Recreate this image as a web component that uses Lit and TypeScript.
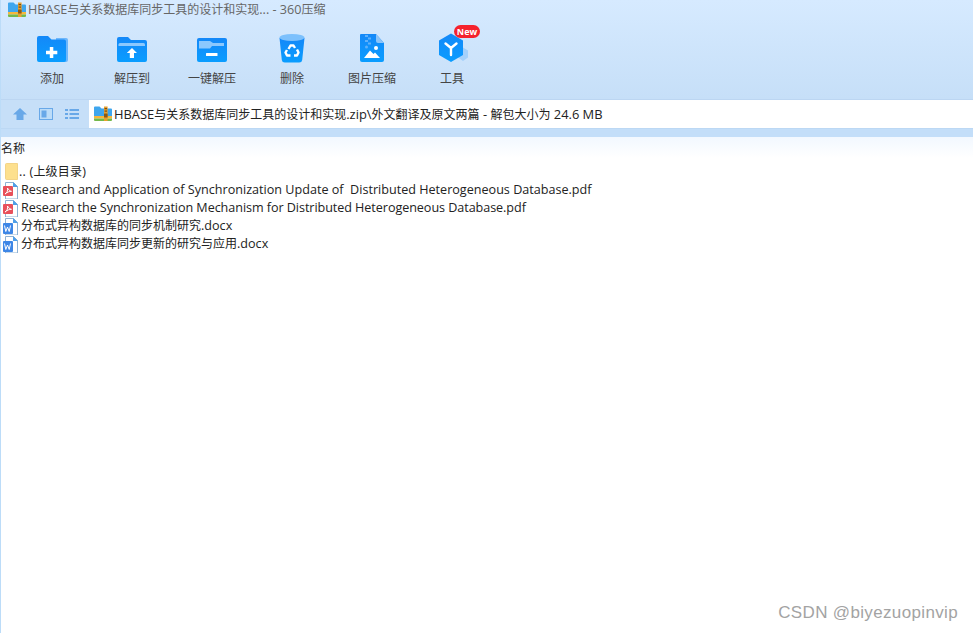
import { LitElement, html, css, svg } from "lit";
import { customElement } from "lit/decorators.js";

const zipIcon = svg`<svg class="zip" width="18" height="18" viewBox="0 0 18 18">
  <path d="M0 2.500a1 1 0 0 1 1-1h4.500l2 2H17a1 1 0 0 1 1 1V11H0z" fill="#3fa6ee"/>
  <rect x="0" y="11" width="18" height="2.500" fill="#f6b73c"/>
  <path d="M0 13.500h18V15a1 1 0 0 1-1 1H1a1 1 0 0 1-1-1z" fill="#74b84a"/>
  <rect x="10" y="1.500" width="3.600" height="14.500" fill="#e8a02c"/>
  <rect x="10.600" y="3" width="2.400" height="1.200" fill="#7a4b12"/>
  <rect x="10.600" y="5.500" width="2.400" height="1.200" fill="#7a4b12"/>
  <rect x="10" y="8.500" width="3.600" height="4" rx=".6" fill="#8a5a18"/>
</svg>`;

const defs = svg`<defs>
  <linearGradient id="blue" x1="0" y1="0" x2="0" y2="1">
    <stop offset="0" stop-color="#1488f8"/><stop offset="1" stop-color="#0a9dff"/>
  </linearGradient>
</defs>`;

const addIcon = svg`<svg width="32" height="30" viewBox="0 0 32 30">${defs}
  <path d="M20 5h10a2 2 0 0 1 2 2v20a2 2 0 0 1-2 2H20z" fill="#6db6fb"/>
  <path d="M1 5a2 2 0 0 1 2-2h9l3.500 3.500H28a2 2 0 0 1 2 2V27a2 2 0 0 1-2 2H3a2 2 0 0 1-2-2z" fill="url(#blue)"/>
  <path d="M13.800 14h3.500v3.800h4v3.400h-4V25h-3.500v-3.800H10v-3.400h3.800z" fill="#fff"/>
</svg>`;
const extractIcon = svg`<svg width="32" height="30" viewBox="0 0 32 30">
  <path d="M1 6a2 2 0 0 1 2-2h9l3 3h14a2 2 0 0 1 2 2v18a2 2 0 0 1-2 2H3a2 2 0 0 1-2-2z" fill="url(#blue)"/>
  <path d="M2.500 11.500a1.500 1.500 0 0 1 1.500-1.500h23.500a1.500 1.500 0 0 1 1.500 1.500V13H2.500z" fill="#8cc8fd"/>
  <path d="M16 15l5 5h-3v5h-4.200v-5h-3z" fill="#fff"/>
</svg>`;
const oneKeyIcon = svg`<svg width="32" height="30" viewBox="0 0 32 30">
  <rect x="1" y="5" width="30" height="24" rx="2" fill="url(#blue)"/>
  <path d="M3 8h11l3 2h11v3H16l-2 2.500H3z" fill="#8cc8fd"/>
  <rect x="10" y="20" width="11.500" height="3" rx=".5" fill="#fff"/>
</svg>`;
const trashIcon = svg`<svg width="28" height="30" viewBox="0 0 28 30">
  <path d="M1.500 5h25l-2.300 22a3 3 0 0 1-3 2.600H6.800a3 3 0 0 1-3-2.600z" fill="url(#blue)"/>
  <ellipse cx="14" cy="4.500" rx="12.500" ry="3.500" fill="#7cc0fc"/>
  <g fill="none" stroke="#fff" stroke-width="2.400" stroke-linejoin="round">
    <path d="M10.500 16l2-3.500h3l1.500 2.500"/><path d="M19 16.500l1.500 3-1.500 3h-3"/><path d="M12.500 22.500H9l-1.500-3 1.500-2.500"/>
  </g>
</svg>`;
const imageIcon = svg`<svg width="26" height="30" viewBox="0 0 26 30">
  <path d="M2 1h15l8 9v17a2 2 0 0 1-2 2H3a2 2 0 0 1-2-2V2a1 1 0 0 1 1-1z" fill="url(#blue)"/>
  <path d="M17 1l8 9h-6a2 2 0 0 1-2-2z" fill="#8cc4f8"/>
  <g fill="#5db0fb"><rect x="6" y="2" width="3" height="2"/><rect x="9" y="4.500" width="3" height="2"/><rect x="6" y="7" width="3" height="2"/><rect x="9" y="9.500" width="3" height="2"/><circle cx="7.500" cy="14" r="1.500"/></g>
  <path d="M5 25l6-7.500 3.500 3.500 1.500-1.500 5 5.500z" fill="#fff"/>
  <circle cx="17" cy="15" r="2" fill="#fff"/>
</svg>`;
const toolIcon = svg`<svg width="32" height="30" viewBox="0 0 32 30">
  <path d="M27 14.500l5 3v7l-5 3.500-5-3.500v-7z" fill="#a3d0fb"/>
  <path d="M15 0.500L27 7.500v14.500L15 29 3 22V7.500z" fill="url(#blue)"/>
  <path d="M15 15v7M15 15L9.500 10.500M15 15l5.500-4.500" stroke="#fff" stroke-width="2.400" fill="none" stroke-linecap="round"/>
</svg>`;

const pageShape = svg`<path d="M3.500 1.500h8l4 4v12.500h-12z" fill="#fff" stroke="#8fb2d4"/>
  <path d="M11 1l5 5h-5z" fill="#4f9fe8"/>`;
const pdfIcon = svg`<svg class="fi" width="17" height="18" viewBox="0 0 17 18">
  ${pageShape}
  <rect x="1" y="5" width="10" height="10" rx="1" fill="#e8505b"/>
  <path d="M3 13c2-1 3-3.500 2.500-6c1 1.800 2.300 3 4 3.300c-2.200 0-4.300.8-6.500 2.700z" stroke="#fff" stroke-width="1" fill="none" stroke-linejoin="round"/>
</svg>`;
const wordIcon = svg`<svg class="fi" width="17" height="18" viewBox="0 0 17 18">
  ${pageShape}
  <rect x="1" y="6" width="10" height="11" rx="1" fill="#3d86e6"/>
  <path d="M2.500 8.500l1.300 6 1.700-4.500 1.700 4.500 1.300-6" stroke="#fff" stroke-width="1" fill="none"/>
</svg>`;
const folderIcon = svg`<svg class="fi folder" width="17" height="18" viewBox="0 0 17 18">
  <path d="M3.500 1.500a1 1 0 0 1 1-1h11v16h-11a1 1 0 0 1-1-1z" fill="#fde08e" stroke="#f0cd78" stroke-width=".8"/>
</svg>`;

const tools = [
  { label: "添加", icon: addIcon },
  { label: "解压到", icon: extractIcon },
  { label: "一键解压", icon: oneKeyIcon },
  { label: "删除", icon: trashIcon },
  { label: "图片压缩", icon: imageIcon },
  { label: "工具", icon: toolIcon, badge: "New" },
];

const files = [
  { name: ".. (上级目录)", icon: folderIcon, cls: "wide" },
  { name: "Research and Application of Synchronization Update of  Distributed Heterogeneous Database.pdf", icon: pdfIcon, cls: "" },
  { name: "Research the Synchronization Mechanism for Distributed Heterogeneous Database.pdf", icon: pdfIcon, cls: "tight" },
  { name: "分布式异构数据库的同步机制研究.docx", icon: wordIcon, cls: "" },
  { name: "分布式异构数据库同步更新的研究与应用.docx", icon: wordIcon, cls: "" },
];

// Latin runs of the original are slightly larger than its 12px CJK runs.
const mixed = (text: string) =>
  text
    .split(/([\u4e00-\u9fff]+)/)
    .map((part, i) => (i % 2 ? html`<span class="cjk">${part}</span>` : part));

@customElement("app-root")
export class AppRoot extends LitElement {
  static styles = css`
    :host {
      display: block;
      width: 973px;
      height: 633px;
      overflow: hidden;
      background: #fff;
      font-family: "Open Sans", "Noto Sans CJK SC", sans-serif;
      color: #222;
      position: relative;
    }
    .cjk { font-size: 12px; }
    .app {
      display: flex;
      flex-direction: column;
      height: 100%;
      border-left: 1px solid #bcdcf8;
      box-sizing: border-box;
    }
    .top {
      background: linear-gradient(#d6eaff, #c6dff8);
      height: 100px;
      flex: none;
      display: flex;
      flex-direction: column;
      box-sizing: border-box;
      border-bottom: 1px solid #bcd6f2;
    }
    .title {
      height: 20px;
      display: flex;
      align-items: center;
      gap: 2px;
      padding-left: 7px;
      font-size: 12.600px;
      line-height: 18px;
      color: #666;
      white-space: pre;
    }
    .tools {
      display: flex;
      padding-left: 11px;
      padding-top: 12px;
    }
    .tool {
      width: 80px;
      display: flex;
      flex-direction: column;
      align-items: center;
      position: relative;
      font-size: 12px;
      color: #444;
    }
    .iconbox {
      height: 32px;
      display: flex;
      align-items: center;
      justify-content: center;
    }
    .label {
      margin-top: 6px;
      line-height: 18px;
    }
    .badge {
      position: absolute;
      top: -7px;
      left: 42px;
      width: 26px;
      height: 13px;
      border-radius: 7px;
      background: #f5222d;
      color: #fff;
      font-size: 9px;
      font-weight: 700;
      line-height: 13px;
      text-align: center;
    }
    .addr-row {
      height: 28px;
      flex: none;
      display: flex;
      align-items: center;
      background: #c6dff8;
      box-sizing: border-box;
    }
    .nav {
      width: 88px;
      display: flex;
      align-items: center;
      gap: 12px;
      padding-left: 12px;
      box-sizing: border-box;
      flex: none;
    }
    .addr {
      flex: 1;
      height: 100%;
      background: #fff;
      display: flex;
      align-items: center;
      gap: 2px;
      padding-left: 5px;
      font-size: 12.900px;
      line-height: 18px;
      color: #222;
      white-space: pre;
    }
    .band {
      height: 9px;
      flex: none;
      background: #c3def9;
      border-top: 1px solid #bcd8f4;
      box-sizing: border-box;
    }
    .head {
      height: 21px;
      flex: none;
      box-sizing: border-box;
      padding-top: 2px;
      background: linear-gradient(#f2f8ff, #ffffff);
      font-size: 12px;
      line-height: 19px;
      color: #222;
    }
    .list {
      flex: 1;
      padding-top: 5px;
    }
    .row {
      height: 18px;
      display: flex;
      align-items: center;
      font-size: 12.600px;
      line-height: 18px;
      white-space: pre;
      color: #222;
      gap: 2px;
      padding-left: 1px;
    }
    .row .fi { flex: none; }
    .row .folder { margin-right: -2px; }
    .wide { letter-spacing: .2px; }
    .tight { letter-spacing: -.06px; }
    .mark {
      position: absolute;
      right: 15px;
      bottom: 10px;
      font: 17px "Liberation Sans", sans-serif;
      color: #a3a3a3;
      letter-spacing: .35px;
    }
  `;

  render() {
    return html`
      <div class="app">
        <div class="top">
          <div class="title">${zipIcon}<span>${mixed("HBASE与关系数据库同步工具的设计和实现... - 360压缩")}</span></div>
          <div class="tools">
            ${tools.map(
              (t) => html`<div class="tool">
                <div class="iconbox">${t.icon}</div>
                <span class="label">${t.label}</span>
                ${t.badge ? html`<div class="badge">${t.badge}</div>` : ""}
              </div>`
            )}
          </div>
        </div>
        <div class="addr-row">
          <div class="nav">
            <svg width="14" height="12" viewBox="0 0 14 12"><path d="M7 0l7 6.500h-3.500V12h-7V6.500H0z" fill="#68a8e8"/></svg>
            <svg width="14" height="12" viewBox="0 0 14 12"><rect x=".5" y=".5" width="13" height="11" fill="#bcdcf8" stroke="#68a8e8"/><rect x="2.500" y="2.500" width="5" height="7" fill="#68a8e8"/></svg>
            <svg width="14" height="12" viewBox="0 0 14 12" fill="#68a8e8"><rect width="3" height="2" y="1"/><rect x="4.500" width="9.500" height="2" y="1"/><rect width="3" height="2" y="5"/><rect x="4.500" width="9.500" height="2" y="5"/><rect width="3" height="2" y="9"/><rect x="4.500" width="9.500" height="2" y="9"/></svg>
          </div>
          <div class="addr">${zipIcon}<span>${mixed("HBASE与关系数据库同步工具的设计和实现.zip\\外文翻译及原文两篇 - 解包大小为 24.6 MB")}</span></div>
        </div>
        <div class="band"></div>
        <div class="head">名称</div>
        <div class="list">
          ${files.map((f) => html`<div class="row ${f.cls}">${f.icon}<span>${mixed(f.name)}</span></div>`)}
        </div>
      </div>
      <div class="mark">CSDN @biyezuopinvip</div>
    `;
  }
}
